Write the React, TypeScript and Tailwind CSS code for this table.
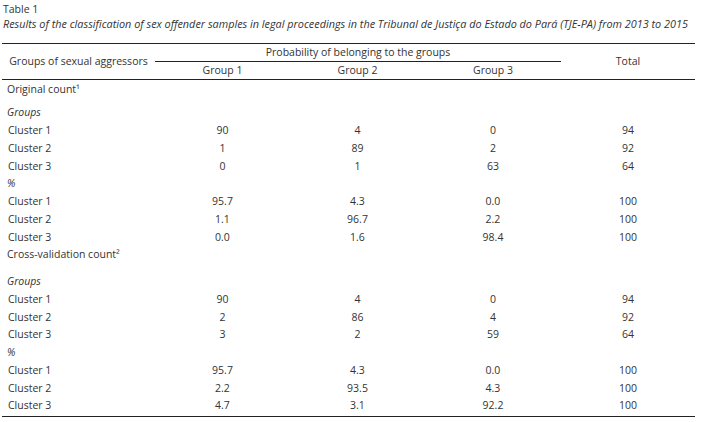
const cols = ['w-[153px]', 'w-[135px]', 'w-[135px]', 'w-[136px]', 'w-[134px]'];

type Row =
  | { kind: 'section'; label: string; cls: string }
  | { kind: 'sub'; label: string; cls: string }
  | { kind: 'data'; label: string; values: string[] };

const rows: Row[] = [
  { kind: 'section', label: 'Original count¹', cls: 'h-[18px] mt-[1px]' },
  { kind: 'sub', label: 'Groups', cls: 'h-[18px] mt-[5px]' },
  { kind: 'data', label: 'Cluster 1', values: ['90', '4', '0', '94'] },
  { kind: 'data', label: 'Cluster 2', values: ['1', '89', '2', '92'] },
  { kind: 'data', label: 'Cluster 3', values: ['0', '1', '63', '64'] },
  { kind: 'sub', label: '%', cls: 'h-[17.75px]' },
  { kind: 'data', label: 'Cluster 1', values: ['95.7', '4.3', '0.0', '100'] },
  { kind: 'data', label: 'Cluster 2', values: ['1.1', '96.7', '2.2', '100'] },
  { kind: 'data', label: 'Cluster 3', values: ['0.0', '1.6', '98.4', '100'] },
  { kind: 'section', label: 'Cross-validation count²', cls: 'h-[17.75px]' },
  { kind: 'sub', label: 'Groups', cls: 'h-[17.75px] mt-[9px]' },
  { kind: 'data', label: 'Cluster 1', values: ['90', '4', '0', '94'] },
  { kind: 'data', label: 'Cluster 2', values: ['2', '86', '4', '92'] },
  { kind: 'data', label: 'Cluster 3', values: ['3', '2', '59', '64'] },
  { kind: 'sub', label: '%', cls: 'h-[17.75px]' },
  { kind: 'data', label: 'Cluster 1', values: ['95.7', '4.3', '0.0', '100'] },
  { kind: 'data', label: 'Cluster 2', values: ['2.2', '93.5', '4.3', '100'] },
  { kind: 'data', label: 'Cluster 3', values: ['4.7', '3.1', '92.2', '100'] },
];

export default function App() {
  return (
    <div className="w-[701px] h-[422px] bg-white text-[#333] text-[10.5px] font-['Open_Sans',sans-serif] overflow-hidden">
      <div className="pl-[3px] pt-[1px] leading-[16px]">Table 1</div>
      <div className="pl-[3px] italic text-[10.85px] leading-[14px] whitespace-nowrap">
        Results of the classification of sex offender samples in legal proceedings in the Tribunal de Justiça do Estado do Pará (TJE-PA) from 2013 to 2015
      </div>

      <div className="ml-[2px] mt-[12px] w-[693px]">
        {/* header */}
        <div className="flex border-t border-b border-[#222]">
          <div className={`${cols[0]} flex items-center justify-center`}>
            Groups of sexual aggressors
          </div>
          <div className="flex flex-col">
            <div className="h-[18px] border-b border-[#222] flex items-center justify-center">
              Probability of belonging to the groups
            </div>
            <div className="flex h-[17px] items-center">
              <div className={`${cols[1]} text-center`}>Group 1</div>
              <div className={`${cols[2]} text-center`}>Group 2</div>
              <div className={`${cols[3]} text-center`}>Group 3</div>
            </div>
          </div>
          <div className={`${cols[4]} flex items-center justify-center`}>Total</div>
        </div>

        {/* body */}
        <div className="border-b border-[#222] pb-[1px]">
          {rows.map((r, i) =>
            r.kind === 'data' ? (
              <div key={i} className="flex h-[17.75px] items-center">
                <div className={`${cols[0]} pl-[6px]`}>{r.label}</div>
                {r.values.map((v, j) => (
                  <div key={j} className={`${cols[j + 1]} text-center`}>
                    {v}
                  </div>
                ))}
              </div>
            ) : (
              <div
                key={i}
                className={`flex items-center pl-[5px] ${r.cls} ${r.kind === 'sub' ? 'italic' : ''}`}
              >
                {r.label}
              </div>
            )
          )}
        </div>
      </div>
    </div>
  );
}
